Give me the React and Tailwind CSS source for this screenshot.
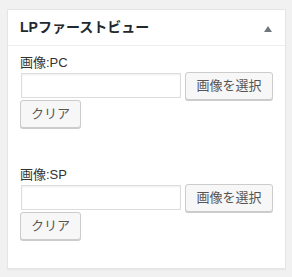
export default function App() {
  const font = "font-['Liberation_Sans','Noto_Sans_CJK_JP',sans-serif]";

  const Field = ({ label }) => (
    <div>
      <div className="text-[13px] leading-[19px] text-[#333]">{label}</div>
      <div className="flex items-start">
        <input
          type="text"
          className="mt-[1px] ml-[1px] w-[160px] h-[25px] border border-[#ddd] bg-white shadow-[inset_0_1px_2px_rgba(0,0,0,0.07)] outline-none"
        />
        <button className="ml-[4px] h-[28px] w-[88px] rounded-[3px] border border-[#ccc] bg-[#f7f7f7] text-[13px] text-[#555] shadow-[0_1px_0_#ccc]">
          画像を選択
        </button>
      </div>
      <button className="h-[28px] w-[61px] rounded-[3px] border border-[#ccc] bg-[#f7f7f7] text-[13px] text-[#555] shadow-[0_1px_0_#ccc]">
        クリア
      </button>
    </div>
  );

  return (
    <div className={`min-h-screen bg-[#f1f1f1] pt-[9px] pl-[7px] pr-[6px] ${font}`}>
      <div className="h-[260px] border border-[#e5e5e5] bg-white shadow-[0_1px_1px_rgba(0,0,0,0.04)]">
        {/* Header */}
        <div className="flex h-[36px] items-center justify-between border-b border-[#eee] pl-[12px] pr-[13px]">
          <h2 className="text-[14px] font-semibold text-[#23282d]">LPファーストビュー</h2>
          <svg width="8" height="6" viewBox="0 0 8 6" className="mt-[2px]">
            <polygon points="4,0 8,6 0,6" fill="#72777c" />
          </svg>
        </div>

        {/* Body */}
        <div className="px-[12px] pt-[7px]">
          <Field label="画像:PC" />
          <div className="h-[37px]" />
          <Field label="画像:SP" />
        </div>
      </div>
    </div>
  );
}
